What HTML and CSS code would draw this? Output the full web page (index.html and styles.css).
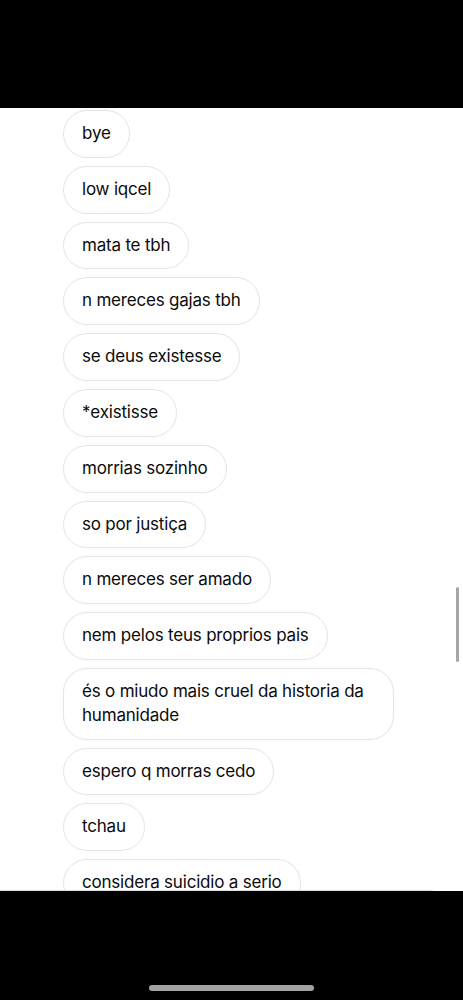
FILE: index.html
```html
<!DOCTYPE html>
<html lang="pt">
<head>
<meta charset="utf-8">
<link rel="stylesheet" href="styles.css">
</head>
<body>
<div class="screen">
  <div class="top-bar"></div>
  <div class="chat">
    <div class="messages">
      <div class="bubble">bye</div>
      <div class="bubble">low iqcel</div>
      <div class="bubble">mata te tbh</div>
      <div class="bubble">n mereces gajas tbh</div>
      <div class="bubble">se deus existesse</div>
      <div class="bubble">*existisse</div>
      <div class="bubble">morrias sozinho</div>
      <div class="bubble">so por justiça</div>
      <div class="bubble">n mereces ser amado</div>
      <div class="bubble">nem pelos teus proprios pais</div>
      <div class="bubble">és o miudo mais cruel da historia da humanidade</div>
      <div class="bubble">espero q morras cedo</div>
      <div class="bubble">tchau</div>
      <div class="bubble">considera suicidio a serio</div>
    </div>
    <div class="scrollbar"></div>
    <div class="composer-edge"></div>
  </div>
  <div class="bottom-bar">
    <div class="home-indicator"></div>
  </div>
</div>
</body>
</html>
```

FILE: styles.css
```css
html, body {
  margin: 0;
  padding: 0;
  background: #000;
}

.screen {
  width: 463px;
  height: 1000px;
  display: flex;
  flex-direction: column;
  font-family: Inter, "Liberation Sans", Arial, sans-serif;
}

.top-bar {
  height: 108px;
  background: #000;
  flex: none;
}

.chat {
  position: relative;
  height: 783px;
  background: #fff;
  overflow: hidden;
  flex: none;
}

.messages {
  display: flex;
  flex-direction: column;
  align-items: flex-start;
  gap: 8px;
  padding: 2px 0 0 63px;
}

.bubble {
  box-sizing: border-box;
  max-width: 331px;
  padding: 11px 18px 11px 18px;
  border: 1px solid #e3e3e3;
  border-radius: 24px;
  font-size: 17px;
  line-height: 23.8px;
  color: #0b0b0b;
  letter-spacing: -0.2px;
}

.scrollbar {
  position: absolute;
  left: 456px;
  top: 479px;
  width: 3px;
  height: 75px;
  border-radius: 2px;
  background: #a6a6a6;
}

.composer-edge {
  position: absolute;
  left: 0;
  top: 782px;
  width: 440px;
  height: 10px;
  border-top: 1px solid #dcdcdc;
  border-right: 1px solid #dcdcdc;
  border-top-right-radius: 16px;
  box-sizing: border-box;
}

.bottom-bar {
  flex: 1;
  background: #000;
  display: flex;
  justify-content: center;
  align-items: flex-end;
  padding-bottom: 9px;
  position: relative;
  z-index: 1;
}

.home-indicator {
  width: 165px;
  height: 6px;
  border-radius: 3px;
  background: #a3a3a3;
}
```
